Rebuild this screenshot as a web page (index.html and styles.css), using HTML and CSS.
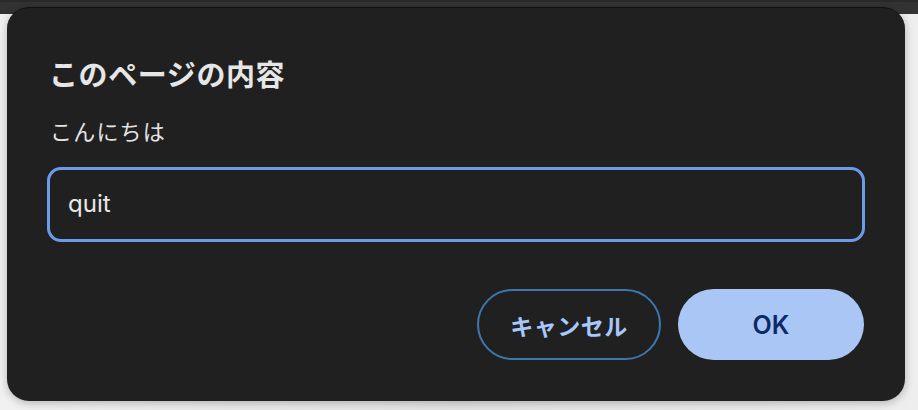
FILE: index.html
```html
<!DOCTYPE html>
<html lang="ja">
<head>
<meta charset="utf-8">
<title>prompt</title>
<link rel="stylesheet" href="styles.css">
</head>
<body>
<div class="topbar"></div>
<div class="stage">
  <div class="dialog" role="dialog">
    <h1 class="title">このページの内容</h1>
    <p class="message">こんにちは</p>
    <div class="field">quit</div>
    <div class="actions">
      <button class="btn btn-cancel">キャンセル</button>
      <button class="btn btn-ok">OK</button>
    </div>
  </div>
</div>
</body>
</html>
```
FILE: styles.css
```css
html, body {
  margin: 0;
  padding: 0;
}
body {
  width: 918px;
  height: 410px;
  overflow: hidden;
  background: linear-gradient(90deg, #f1f1f1 0%, #e4e4e4 50%, #eeeeee 100%);
  font-family: "Inter", "Noto Sans CJK JP", sans-serif;
  position: relative;
}
.topbar {
  height: 14px;
  background: #333333;
  border-top: 2px solid #2a2a2a;
  box-sizing: border-box;
}
.stage {
  position: absolute;
  left: 7px;
  top: 7px;
  width: 898px;
  height: 394px;
}
.dialog {
  box-sizing: border-box;
  width: 100%;
  height: 100%;
  background: #202020;
  border-radius: 22px;
  border-top: 1px solid #111;
  box-shadow: 0 2px 8px rgba(0,0,0,0.25);
  padding: 0 40px;
  display: flex;
  flex-direction: column;
}
.title {
  margin: 45px 0 0 2px;
  font-family: "Noto Sans CJK JP", sans-serif;
  font-size: 29px;
  line-height: 40px;
  font-weight: 700;
  color: #e6e6e6;
  letter-spacing: 0.6px;
}
.message {
  margin: 22px 0 0 3px;
  font-family: "Noto Sans CJK JP", sans-serif;
  font-size: 22px;
  line-height: 30px;
  color: #e3e3e3;
  letter-spacing: 1.2px;
}
.field {
  box-sizing: border-box;
  margin-top: 22px;
  height: 75px;
  border: 3px solid #6e9be8;
  border-radius: 14px;
  padding: 0 18px;
  display: flex;
  align-items: center;
  font-family: "Inter", sans-serif;
  font-size: 24px;
  color: #e8e8e8;
  padding-bottom: 2px;
}
.actions {
  margin-top: 47px;
  display: flex;
  justify-content: flex-end;
  gap: 17px;
  padding-right: 1px;
}
.btn {
  box-sizing: border-box;
  height: 71px;
  border-radius: 36px;
  font-family: "Inter", "Noto Sans CJK JP", sans-serif;
  font-weight: 600;
  font-size: 23px;
  padding: 0;
  cursor: pointer;
}
.btn-cancel {
  width: 184px;
  background: transparent;
  border: 2px solid #3b78b0;
  color: #a8c7fa;
  font-weight: 700;
  letter-spacing: 0.5px;
}
.btn-ok {
  width: 186px;
  background: #a9c6f5;
  border: none;
  color: #0e2a66;
  font-size: 25px;
}
```
